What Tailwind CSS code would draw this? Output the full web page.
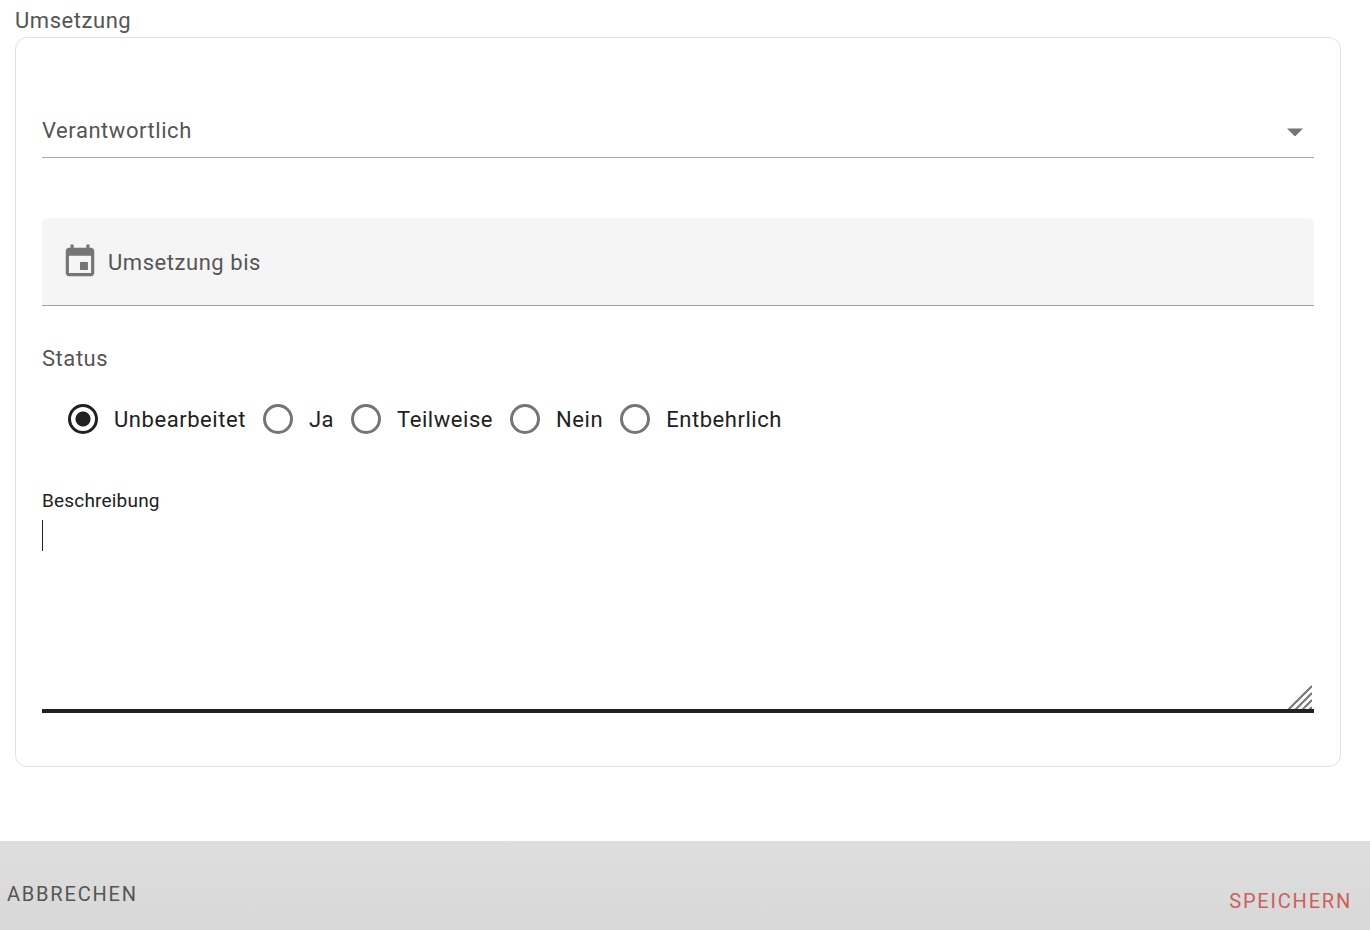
<!DOCTYPE html>
<html lang="de">

<head>
    <meta charset="UTF-8">
    <meta name="viewport" content="width=device-width, initial-scale=1.0">
    <title>Umsetzung</title>
    <script src="https://cdn.jsdelivr.net/npm/@tailwindcss/browser@4"></script>
</head>

<body class="bg-white font-[Roboto,sans-serif] text-[22px] leading-8 tracking-wide text-[#212121]">
    <form class="flex min-h-screen flex-col">
        <main class="flex-1 pt-[5px] pr-[29px] pb-[74px] pl-[15px]">
            <h1 class="text-[#555]">Umsetzung</h1>

            <section class="rounded-xl border border-[#e0e0e6] px-[26px] pt-16 pb-[53px]">
                <!-- responsible person -->
                <div class="relative border-b border-[#a6a6a6]">
                    <label for="verantwortlich" class="pointer-events-none absolute top-[13px] left-0 text-[#555]">Verantwortlich</label>
                    <select id="verantwortlich" class="block h-[55px] w-full appearance-none bg-transparent outline-none">
                        <option value=""></option>
                    </select>
                    <svg class="pointer-events-none absolute top-[26px] right-[11px] h-2 w-4" viewBox="0 0 16 8" fill="#757575"><path d="M0 .5h16L8 8.5z"/></svg>
                </div>

                <!-- due date -->
                <div class="mt-[60px] flex h-[88px] items-center rounded-t-md border-b border-[#a0a0a0] bg-[#f5f5f5] pl-[19px]">
                    <svg class="h-[38px] w-[38px] shrink-0" viewBox="0 0 24 24" fill="#757575"><path d="M17 12h-5v5h5v-5zM16 1v2H8V1H6v2H5c-1.11 0-1.99.9-1.99 2L3 19c0 1.1.89 2 2 2h14c1.1 0 2-.9 2-2V5c0-1.1-.9-2-2-2h-1V1h-2zm3 18H5V8h14v11z"/></svg>
                    <input type="text" aria-label="Umsetzung bis" placeholder="Umsetzung bis" class="ml-[9px] min-w-0 flex-1 pt-0.5 tracking-wide outline-none placeholder:text-[#555]">
                </div>

                <!-- status -->
                <fieldset class="mt-[37px]">
                    <legend class="text-[#555]">Status</legend>
                    <div class="flex flex-wrap gap-x-[17px] pt-[27px] pl-[26px]">
                        <label class="flex items-center gap-4">
                            <input type="radio" name="status" checked class="m-0 h-[30px] w-[30px] appearance-none rounded-full border-3 border-[#757575] checked:border-[#212121] checked:bg-[radial-gradient(circle,#212121_7px,transparent_8px)]">
                            <span class="pt-0.5">Unbearbeitet</span>
                        </label>
                        <label class="flex items-center gap-4">
                            <input type="radio" name="status" class="m-0 h-[30px] w-[30px] appearance-none rounded-full border-3 border-[#757575] checked:border-[#212121] checked:bg-[radial-gradient(circle,#212121_7px,transparent_8px)]">
                            <span class="pt-0.5">Ja</span>
                        </label>
                        <label class="flex items-center gap-4">
                            <input type="radio" name="status" class="m-0 h-[30px] w-[30px] appearance-none rounded-full border-3 border-[#757575] checked:border-[#212121] checked:bg-[radial-gradient(circle,#212121_7px,transparent_8px)]">
                            <span class="pt-0.5">Teilweise</span>
                        </label>
                        <label class="flex items-center gap-4">
                            <input type="radio" name="status" class="m-0 h-[30px] w-[30px] appearance-none rounded-full border-3 border-[#757575] checked:border-[#212121] checked:bg-[radial-gradient(circle,#212121_7px,transparent_8px)]">
                            <span class="pt-0.5">Nein</span>
                        </label>
                        <label class="flex items-center gap-4">
                            <input type="radio" name="status" class="m-0 h-[30px] w-[30px] appearance-none rounded-full border-3 border-[#757575] checked:border-[#212121] checked:bg-[radial-gradient(circle,#212121_7px,transparent_8px)]">
                            <span class="pt-0.5">Entbehrlich</span>
                        </label>
                    </div>
                </fieldset>

                <!-- description -->
                <div class="mt-[53px]">
                    <label for="beschreibung" class="block text-[19px] leading-6 tracking-[0.01em]">Beschreibung</label>
                    <div class="relative border-b-4 border-[#212121] pt-[7px]">
                        <textarea id="beschreibung" class="block h-[189px] w-full resize-none outline-none"></textarea>
                        <!-- caret -->
                        <span class="pointer-events-none absolute top-[7px] left-0 h-[31px] w-px bg-[#212121]"></span>
                        <!-- resize grip -->
                        <svg class="pointer-events-none absolute right-[2px] bottom-0 h-6 w-6" viewBox="0 0 24 24" fill="none" stroke="#757575" stroke-width="2"><path d="M0 25 24 1M7 25 24 8M14 25 24 15M21 25 24 22"/></svg>
                    </div>
                </div>
            </section>
        </main>

        <footer class="flex h-[89px] items-start justify-between bg-linear-to-b from-[#dedede] to-[#d8d8d8] pt-[39px] pr-[18px] pl-[7px] text-xl">
            <button type="button" class="tracking-[0.09em] text-[#555]">ABBRECHEN</button>
            <button type="submit" class="mt-[7px] tracking-[0.09em] text-[#cb615b]">SPEICHERN</button>
        </footer>
    </form>
</body>

</html>
